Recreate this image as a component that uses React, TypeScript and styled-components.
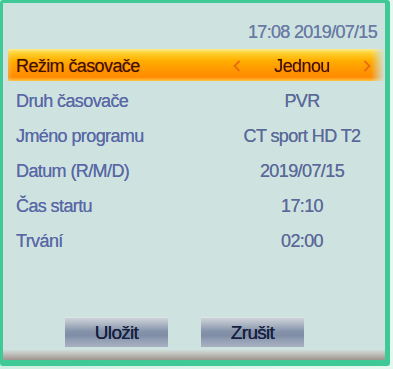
import React from "react";
import styled, { createGlobalStyle } from "styled-components";

const Global = createGlobalStyle`
  html, body { margin: 0; padding: 0; background: #d8f4ea; }
  * { box-sizing: border-box; }
`;

const Outer = styled.div`
  width: 393px;
  height: 369px;
  padding: 0 3px 3px 0;
  background: linear-gradient(to right, #cdeee2, #e4f8f0);
  font-family: "Liberation Sans", Arial, sans-serif;
`;

const Frame = styled.div`
  width: 390px;
  height: 366px;
  border: 3px solid #3ec996;
  border-right-width: 5px;
  border-bottom-width: 6px;
  border-radius: 3px;
  background: #cee3df;
  display: flex;
  flex-direction: column;
  overflow: hidden;
`;

const Header = styled.div`
  padding: 19px 8px 0 0;
  height: 39px;
  line-height: 20px;
  font-size: 18px;
  letter-spacing: -0.7px;
  color: #6a7ba6;
  text-shadow: 0 0 0.6px #6a7ba6;
  text-align: right;
`;

const List = styled.div`
  margin: 5px 0 0 5px;
  display: flex;
  flex-direction: column;
`;

const Row = styled.div<{ $active?: boolean }>`
  display: grid;
  grid-template-columns: 210px 1fr;
  height: 35px;
  padding-top: 2px;
  line-height: 35px;
  font-size: 18px;
  letter-spacing: -0.6px;
  color: ${(p) => (p.$active ? "#3a1400" : "#5868a6")};
  text-shadow: ${(p) => (p.$active ? "0 0 1px #d04800" : "0 0 0.6px #6a78b0")};
  background: ${(p) =>
    p.$active
      ? "linear-gradient(to bottom, #ffeb90 0%, #ffd232 12%, #ffb000 35%, #ff9c00 60%, #ff8a00 88%, #ffc444 100%)"
      : "none"};
  background-size: 100% 32px;
  background-position: 0 1.5px;
  background-repeat: no-repeat;
  -webkit-mask-image: ${(p) =>
    p.$active
      ? "linear-gradient(to right, rgba(0,0,0,0.75) 0, #000 5px, #000 calc(100% - 14px), rgba(0,0,0,0) 100%)"
      : "none"};
`;

const Label = styled.span`
  padding-left: 8px;
  white-space: nowrap;
`;

const Value = styled.span<{ $active?: boolean }>`
  display: flex;
  align-items: center;
  justify-content: ${(p) => (p.$active ? "space-between" : "center")};
  padding: 0 14px 0 15px;
  color: ${(p) => (p.$active ? "#3a1400" : "#5a6996")};
  white-space: nowrap;
`;

const Arrow = styled.svg`
  width: 8px;
  height: 12px;
  margin-top: -2px;
  flex: none;
`;

const ButtonRow = styled.div`
  margin-top: auto;
  padding: 0 0 3px 62px;
  display: flex;
  gap: 33px;
`;

const Button = styled.div`
  width: 103px;
  height: 30px;
  line-height: 30px;
  text-align: center;
  font-size: 19px;
  letter-spacing: -0.7px;
  color: #162040;
  text-shadow: 0 0 0.6px #162040;
  background: linear-gradient(
    to bottom,
    #cdd3da 0%,
    #b3bbc7 18%,
    #8593aa 45%,
    #7f8da6 60%,
    #99a4b8 82%,
    #a8b1c2 100%
  );
  border-top: 1px solid #dfe4e8;
`;

const Shade = styled.div`
  height: 10px;
  flex: none;
  background: linear-gradient(to bottom, #cfdcd8 0%, #c2c4c0 35%, #aea6a0 75%, #9e948e 100%);
`;

const ArrowLeft = () => (
  <Arrow viewBox="0 0 8 12">
    <path d="M6.5 1 L1.5 6 L6.5 11" fill="none" stroke="#ea6a12" strokeWidth="1.8" />
  </Arrow>
);

const ArrowRight = () => (
  <Arrow viewBox="0 0 8 12">
    <path d="M1.5 1 L6.5 6 L1.5 11" fill="none" stroke="#ea6a12" strokeWidth="1.8" />
  </Arrow>
);

const rows = [
  { label: "Druh časovače", value: "PVR" },
  { label: "Jméno programu", value: "CT sport HD T2" },
  { label: "Datum (R/M/D)", value: "2019/07/15" },
  { label: "Čas startu", value: "17:10" },
  { label: "Trvání", value: "02:00" },
];

export default function App() {
  return (
    <>
      <Global />
      <Outer>
        <Frame>
          <Header>17:08 2019/07/15</Header>
          <List>
            <Row $active>
              <Label>Režim časovače</Label>
              <Value $active>
                <ArrowLeft />
                <span>Jednou</span>
                <ArrowRight />
              </Value>
            </Row>
            {rows.map((r) => (
              <Row key={r.label}>
                <Label>{r.label}</Label>
                <Value>{r.value}</Value>
              </Row>
            ))}
          </List>
          <ButtonRow>
            <Button>Uložit</Button>
            <Button>Zrušit</Button>
          </ButtonRow>
          <Shade />
        </Frame>
      </Outer>
    </>
  );
}
